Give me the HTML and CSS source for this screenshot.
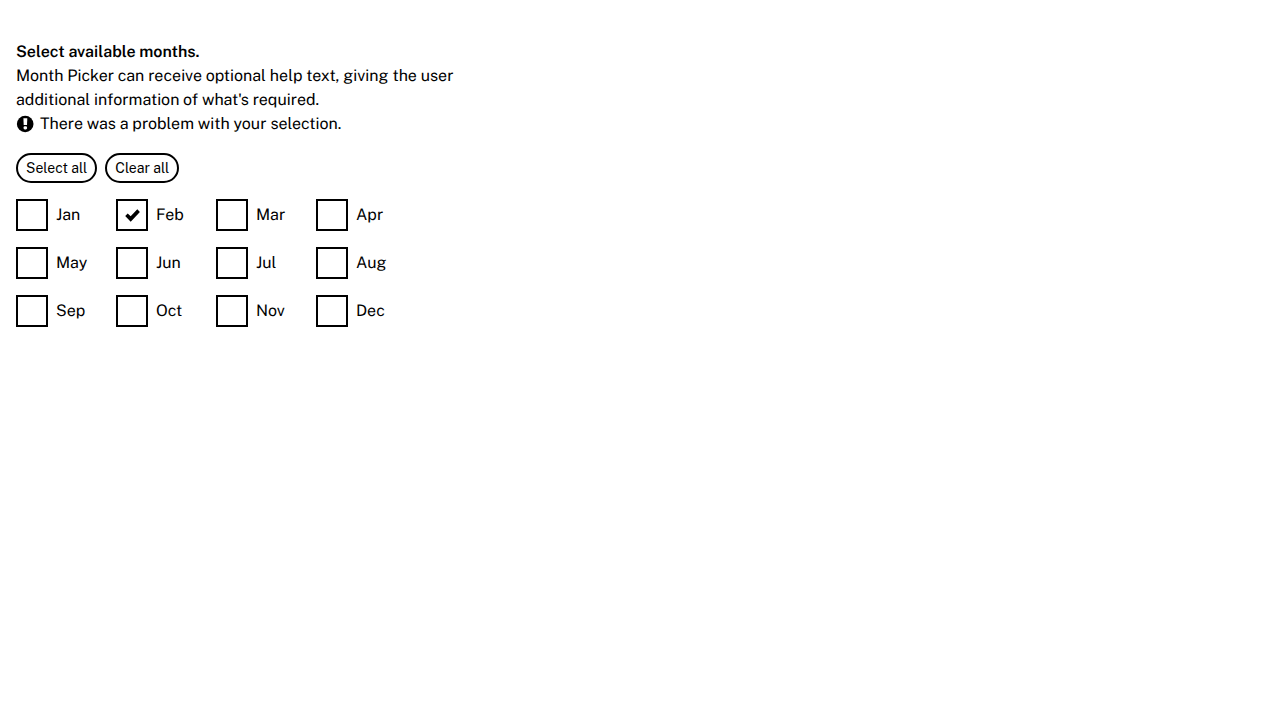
FILE: index.html
```html
<!DOCTYPE html>
<html lang="en">
<head>
<meta charset="utf-8">
<title>Month Picker</title>
<link rel="stylesheet" href="styles.css">
</head>
<body>
<fieldset class="picker" aria-describedby="help error">
  <legend class="title">Select available months.</legend>
  <p class="help" id="help">Month Picker can receive optional help text, giving the user additional information of what's required.</p>
  <p class="error" id="error">
    <svg class="error-icon" viewBox="0 0 18 18" aria-hidden="true"><circle cx="9.2" cy="9" r="8.3"/><path class="mark" d="M7.4 3.2h3.9l-.3 6.8H7.7z"/><rect class="mark" x="7.5" y="11.3" width="3.6" height="3.2" rx="1.4"/></svg>
    <span>There was a problem with your selection.</span>
  </p>
  <div class="actions">
    <button class="pill" type="button">Select all</button>
    <button class="pill" type="button">Clear all</button>
  </div>
  <div class="months">
    <label class="month"><input class="box" type="checkbox">Jan</label>
    <label class="month"><input class="box" type="checkbox" checked><svg class="tick" viewBox="0 0 16 16" aria-hidden="true"><path d="M1.2 9l2.5-2.5 3 2.8 6.6-7 2.6 2.6-9.2 9.8z"/></svg>Feb</label>
    <label class="month"><input class="box" type="checkbox">Mar</label>
    <label class="month"><input class="box" type="checkbox">Apr</label>
    <label class="month"><input class="box" type="checkbox">May</label>
    <label class="month"><input class="box" type="checkbox">Jun</label>
    <label class="month"><input class="box" type="checkbox">Jul</label>
    <label class="month"><input class="box" type="checkbox">Aug</label>
    <label class="month"><input class="box" type="checkbox">Sep</label>
    <label class="month"><input class="box" type="checkbox">Oct</label>
    <label class="month"><input class="box" type="checkbox">Nov</label>
    <label class="month"><input class="box" type="checkbox">Dec</label>
  </div>
</fieldset>
</body>
</html>
```
FILE: styles.css
```css
* { box-sizing: border-box; }
body {
  margin: 0;
  padding: 40px 16px 16px;
  background: #fff;
  color: #000;
  font: 400 16px/24px "Public Sans", Inter, "Liberation Sans", sans-serif;
  text-rendering: geometricPrecision;
}
.picker {
  min-width: 0;
  max-width: 460px;
  margin: 0;
  padding: 0;
  border: 0;
}
.title {
  padding: 0;
  font-weight: 650;
}
.help, .error { margin: 0; }
.error {
  display: flex;
  align-items: center;
  gap: 6px;
}
.error-icon {
  flex: none;
  width: 18px;
  height: 18px;
}
.mark { fill: #fff; }
.actions {
  display: flex;
  gap: 8px;
  margin: 17px 0 16px;
}
.pill {
  height: 30px;
  padding: 0 8px;
  border: 2px solid #000;
  border-radius: 15px;
  background: #fff;
  color: #000;
  font: inherit;
  font-size: 14px;
  line-height: 20px;
}
.months {
  display: grid;
  grid-template-columns: repeat(4, 84px);
  gap: 16px;
}
.month {
  position: relative;
  display: flex;
  align-items: center;
  gap: 8px;
}
.box {
  appearance: none;
  flex: none;
  width: 32px;
  height: 32px;
  margin: 0;
  border: 2px solid #000;
  background: #fff;
}
.tick {
  position: absolute;
  left: 8px;
  top: 8px;
  width: 16px;
  height: 16px;
  pointer-events: none;
}
```
